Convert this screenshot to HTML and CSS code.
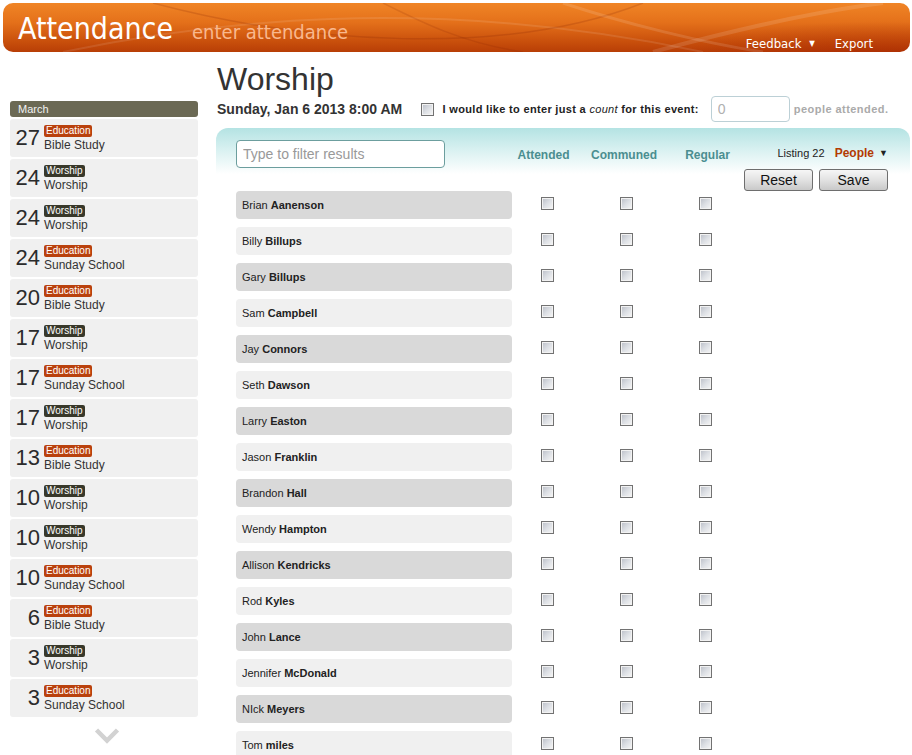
FILE: index.html
```html
<!DOCTYPE html>
<html lang="en">
<head>
<meta charset="utf-8">
<title>Attendance</title>
<link rel="stylesheet" href="styles.css">
</head>
<body>
<header class="topbar">
  <svg class="swoosh" viewBox="0 0 907 49" preserveAspectRatio="none" aria-hidden="true">
    <path d="M60 49 C 200 20, 420 -10, 700 49" fill="none" stroke="rgba(255,255,255,0.10)" stroke-width="2"/>
    <path d="M150 0 C 300 40, 500 55, 640 0" fill="none" stroke="rgba(120,30,0,0.18)" stroke-width="1.5"/>
    <path d="M560 0 C 620 20, 700 40, 760 49" fill="none" stroke="rgba(255,255,255,0.12)" stroke-width="3"/>
    <path d="M650 49 C 720 30, 800 10, 880 0" fill="none" stroke="rgba(255,255,255,0.12)" stroke-width="4"/>
    <path d="M380 0 C 420 20, 460 40, 520 49" fill="none" stroke="rgba(120,30,0,0.15)" stroke-width="1.5"/>
  </svg>
  <h1 class="app-title">Attendance</h1>
  <span class="app-sub">enter attendance</span>
  <nav class="topnav">
    <a class="nav-link">Feedback <span class="caret">&#9660;</span></a>
    <a class="nav-link">Export</a>
  </nav>
</header>

<div class="page">
  <aside class="sidebar">
    <div class="month">March</div>
    <ul class="events">
      <li class="event"><span class="day">27</span><span class="info"><span class="tag edu">Education</span><span class="ename">Bible Study</span></span></li>
      <li class="event"><span class="day">24</span><span class="info"><span class="tag wor">Worship</span><span class="ename">Worship</span></span></li>
      <li class="event"><span class="day">24</span><span class="info"><span class="tag wor">Worship</span><span class="ename">Worship</span></span></li>
      <li class="event"><span class="day">24</span><span class="info"><span class="tag edu">Education</span><span class="ename">Sunday School</span></span></li>
      <li class="event"><span class="day">20</span><span class="info"><span class="tag edu">Education</span><span class="ename">Bible Study</span></span></li>
      <li class="event"><span class="day">17</span><span class="info"><span class="tag wor">Worship</span><span class="ename">Worship</span></span></li>
      <li class="event"><span class="day">17</span><span class="info"><span class="tag edu">Education</span><span class="ename">Sunday School</span></span></li>
      <li class="event"><span class="day">17</span><span class="info"><span class="tag wor">Worship</span><span class="ename">Worship</span></span></li>
      <li class="event"><span class="day">13</span><span class="info"><span class="tag edu">Education</span><span class="ename">Bible Study</span></span></li>
      <li class="event"><span class="day">10</span><span class="info"><span class="tag wor">Worship</span><span class="ename">Worship</span></span></li>
      <li class="event"><span class="day">10</span><span class="info"><span class="tag wor">Worship</span><span class="ename">Worship</span></span></li>
      <li class="event"><span class="day">10</span><span class="info"><span class="tag edu">Education</span><span class="ename">Sunday School</span></span></li>
      <li class="event"><span class="day">6</span><span class="info"><span class="tag edu">Education</span><span class="ename">Bible Study</span></span></li>
      <li class="event"><span class="day">3</span><span class="info"><span class="tag wor">Worship</span><span class="ename">Worship</span></span></li>
      <li class="event"><span class="day">3</span><span class="info"><span class="tag edu">Education</span><span class="ename">Sunday School</span></span></li>
    </ul>
    <div class="more">
      <svg width="26" height="17" viewBox="0 0 26 17" aria-hidden="true"><polyline points="2.5,3 13,13.5 23.5,3" fill="none" stroke="#d2d2d2" stroke-width="4.5"/></svg>
    </div>
  </aside>

  <main class="main">
    <h2 class="event-title">Worship</h2>
    <div class="event-meta">
      <span class="event-date">Sunday, Jan 6 2013 8:00 AM</span>
      <label class="count-opt"><input type="checkbox" class="cb"> I would like to enter just a <em>count</em> for this event:</label>
      <input class="count-input" type="text" placeholder="0">
      <span class="count-note">people attended.</span>
    </div>

    <section class="panel">
      <div class="panel-head">
        <input class="filter" type="text" placeholder="Type to filter results">
        <span class="col-label">Attended</span>
        <span class="col-label">Communed</span>
        <span class="col-label last">Regular</span>
        <div class="tools">
          <div class="listing">Listing 22 <span class="people">People</span> <span class="caret dark">&#9660;</span></div>
          <div class="btns"><button class="btn">Reset</button><button class="btn">Save</button></div>
        </div>
      </div>

      <div class="rows">
        <div class="name dark">Brian <b>Aanenson</b></div><span class="c"><input type="checkbox" class="cb"></span><span class="c"><input type="checkbox" class="cb"></span><span class="c last"><input type="checkbox" class="cb"></span>
        <div class="name">Billy <b>Billups</b></div><span class="c"><input type="checkbox" class="cb"></span><span class="c"><input type="checkbox" class="cb"></span><span class="c last"><input type="checkbox" class="cb"></span>
        <div class="name dark">Gary <b>Billups</b></div><span class="c"><input type="checkbox" class="cb"></span><span class="c"><input type="checkbox" class="cb"></span><span class="c last"><input type="checkbox" class="cb"></span>
        <div class="name">Sam <b>Campbell</b></div><span class="c"><input type="checkbox" class="cb"></span><span class="c"><input type="checkbox" class="cb"></span><span class="c last"><input type="checkbox" class="cb"></span>
        <div class="name dark">Jay <b>Connors</b></div><span class="c"><input type="checkbox" class="cb"></span><span class="c"><input type="checkbox" class="cb"></span><span class="c last"><input type="checkbox" class="cb"></span>
        <div class="name">Seth <b>Dawson</b></div><span class="c"><input type="checkbox" class="cb"></span><span class="c"><input type="checkbox" class="cb"></span><span class="c last"><input type="checkbox" class="cb"></span>
        <div class="name dark">Larry <b>Easton</b></div><span class="c"><input type="checkbox" class="cb"></span><span class="c"><input type="checkbox" class="cb"></span><span class="c last"><input type="checkbox" class="cb"></span>
        <div class="name">Jason <b>Franklin</b></div><span class="c"><input type="checkbox" class="cb"></span><span class="c"><input type="checkbox" class="cb"></span><span class="c last"><input type="checkbox" class="cb"></span>
        <div class="name dark">Brandon <b>Hall</b></div><span class="c"><input type="checkbox" class="cb"></span><span class="c"><input type="checkbox" class="cb"></span><span class="c last"><input type="checkbox" class="cb"></span>
        <div class="name">Wendy <b>Hampton</b></div><span class="c"><input type="checkbox" class="cb"></span><span class="c"><input type="checkbox" class="cb"></span><span class="c last"><input type="checkbox" class="cb"></span>
        <div class="name dark">Allison <b>Kendricks</b></div><span class="c"><input type="checkbox" class="cb"></span><span class="c"><input type="checkbox" class="cb"></span><span class="c last"><input type="checkbox" class="cb"></span>
        <div class="name">Rod <b>Kyles</b></div><span class="c"><input type="checkbox" class="cb"></span><span class="c"><input type="checkbox" class="cb"></span><span class="c last"><input type="checkbox" class="cb"></span>
        <div class="name dark">John <b>Lance</b></div><span class="c"><input type="checkbox" class="cb"></span><span class="c"><input type="checkbox" class="cb"></span><span class="c last"><input type="checkbox" class="cb"></span>
        <div class="name">Jennifer <b>McDonald</b></div><span class="c"><input type="checkbox" class="cb"></span><span class="c"><input type="checkbox" class="cb"></span><span class="c last"><input type="checkbox" class="cb"></span>
        <div class="name dark">NIck <b>Meyers</b></div><span class="c"><input type="checkbox" class="cb"></span><span class="c"><input type="checkbox" class="cb"></span><span class="c last"><input type="checkbox" class="cb"></span>
        <div class="name">Tom <b>miles</b></div><span class="c"><input type="checkbox" class="cb"></span><span class="c"><input type="checkbox" class="cb"></span><span class="c last"><input type="checkbox" class="cb"></span>
      </div>
    </section>
  </main>
</div>
</body>
</html>
```

FILE: styles.css
```css
html { overflow: hidden; }
body {
  margin: 0;
  font-family: "Liberation Sans", Arial, sans-serif;
  color: #222;
  background: #fff;
}

/* ---------- top bar ---------- */
.topbar {
  position: relative;
  display: flex;
  align-items: baseline;
  height: 49px;
  margin: 3px 2px 0 3px;
  padding: 9px 37px 0 15px;
  box-sizing: border-box;
  border-radius: 10px;
  overflow: hidden;
  background:
    radial-gradient(ellipse 300px 60px at 880px 60px, rgba(160,30,0,0.55), rgba(160,30,0,0) 70%),
    linear-gradient(to bottom, #f08526 0%, #e4701a 40%, #c9500c 78%, #b83e06 100%);
  font-family: "DejaVu Sans Condensed", "DejaVu Sans", sans-serif;
}
.swoosh {
  position: absolute;
  left: 0; top: 0;
  width: 100%; height: 100%;
}
.app-title {
  position: relative;
  margin: 0;
  font-size: 30px;
  line-height: 34px;
  font-weight: normal;
  color: #fff;
}
.app-sub {
  position: relative;
  margin-left: 19px;
  font-size: 20px;
  color: #f9b88e;
}
.topnav {
  position: relative;
  display: flex;
  gap: 20px;
  margin-left: auto;
  align-self: flex-end;
  margin-bottom: 0;
  font-size: 13px;
  line-height: 16px;
}
.nav-link { color: #fff; }
.caret { font-size: 8px; vertical-align: 2px; margin-left: 4px; }

/* ---------- page ---------- */
.page {
  display: flex;
  align-items: flex-start;
  padding-left: 10px;
}

/* ---------- sidebar ---------- */
.sidebar {
  width: 188px;
  margin-top: 49px;
  flex: none;
}
.month {
  height: 16px;
  line-height: 16px;
  padding-left: 8px;
  border-radius: 3px;
  background: #6b6954;
  color: #f2f2f2;
  font-size: 11px;
}
.events {
  list-style: none;
  margin: 0;
  padding: 0;
}
.event {
  display: flex;
  align-items: center;
  height: 38px;
  margin-top: 2px;
  border-radius: 3px;
  background: #f0f0f0;
}
.day {
  width: 30px;
  text-align: right;
  font-size: 22px;
  color: #2b2b2b;
  flex: none;
}
.info {
  display: flex;
  flex-direction: column;
  align-items: flex-start;
  margin-left: 4px;
  padding-top: 1px;
}
.tag {
  height: 12px;
  line-height: 12px;
  padding: 0 2px;
  border-radius: 2px;
  color: #fff;
  font-size: 10px;
}
.tag.edu { background: #b9410d; }
.tag.wor { background: #38382a; }
.ename {
  font-size: 12px;
  line-height: 16px;
  color: #333;
}
.more {
  display: flex;
  justify-content: center;
  padding: 10px 0 0 6px;
}

/* ---------- main ---------- */
.main {
  flex: 1;
  margin-left: 18px;
  margin-right: 2px;
}
.event-title {
  margin: 10px 0 0 1px;
  font-size: 32px;
  line-height: 34px;
  font-weight: normal;
  color: #333;
}
.event-meta {
  display: flex;
  align-items: center;
  height: 26px;
  padding-left: 1px;
}
.event-date {
  font-size: 14px;
  font-weight: bold;
  color: #333;
}
.count-opt {
  display: flex;
  align-items: center;
  margin-left: 19px;
  font-size: 11px;
  font-weight: bold;
  letter-spacing: 0.32px;
  color: #222;
  white-space: pre;
}
.count-opt em { font-weight: normal; }
.count-opt .cb { margin: 0 5px 0 0; }
.count-input {
  width: 79px;
  height: 26px;
  box-sizing: border-box;
  margin-left: 12px;
  padding: 0 6px;
  border: 1px solid #bcd0d6;
  border-radius: 4px;
  font: 14px "Liberation Sans", Arial, sans-serif;
}
.count-input::placeholder { color: #b0b0b0; }
.count-note {
  margin-left: 4px;
  font-size: 11px;
  font-weight: bold;
  letter-spacing: 0.45px;
  color: #aaa;
}

/* checkbox */
.cb {
  appearance: none;
  -webkit-appearance: none;
  width: 13px;
  height: 13px;
  margin: 0;
  box-sizing: border-box;
  border: 1px solid #727272;
  box-shadow: inset 0 0 0 1px #f2f2f2;
  background: linear-gradient(135deg, #b9bdc6 0%, #dcdfe4 50%, #f7f7f7 100%);
  display: block;
}

/* ---------- panel ---------- */
.panel {
  margin-top: 6px;
  padding: 12px 22px 0 20px;
  border-radius: 12px 12px 0 0;
  background: linear-gradient(to bottom, #b4e3e3 0px, #d9f1f1 22px, #ffffff 46px);
}
.panel-head {
  display: grid;
  grid-template-columns: 276px 79px 79px 71px 1fr;
}
.rows {
  display: grid;
  grid-template-columns: 276px 79px 79px 71px;
  row-gap: 8px;
}
.filter {
  width: 209px;
  height: 28px;
  box-sizing: border-box;
  padding: 0 6px;
  border: 1px solid #6c9e9e;
  border-radius: 4px;
  font: 14px "Liberation Sans", Arial, sans-serif;
  align-self: start;
}
.filter::placeholder { color: #999; }
.col-label {
  align-self: start;
  margin-top: 8px;
  padding-right: 16px;
  text-align: center;
  font-size: 12px;
  line-height: 14px;
  font-weight: bold;
  color: #4b8e90;
}
.col-label.last { padding-right: 0; padding-left: 4px; }
.tools {
  display: flex;
  flex-direction: column;
  align-items: flex-end;
}
.listing {
  margin-top: 5px;
  font-size: 11px;
  line-height: 16px;
  color: #222;
}
.people {
  margin-left: 7px;
  font-size: 12px;
  font-weight: bold;
  color: #b33a02;
}
.caret.dark { color: #222; margin-left: 2px; font-size: 9px; vertical-align: 1px; }
.btns {
  display: flex;
  gap: 6px;
  margin-top: 8px;
}
.btn {
  width: 69px;
  height: 22px;
  padding: 0;
  border: 1px solid #6e6e6e;
  border-radius: 3px;
  background: linear-gradient(to bottom, #f6f6f6 0%, #e2e2e2 50%, #c9c9c9 100%);
  font: 14px "Liberation Sans", Arial, sans-serif;
  color: #111;
}

.name {
  height: 28px;
  line-height: 28px;
  padding-left: 6px;
  border-radius: 4px;
  background: #f0f0f0;
  font-size: 11px;
  color: #222;
}
.name.dark { background: #d9d9d9; }
.c {
  display: flex;
  justify-content: center;
  padding: 6px 8px 0 0;
}
.c.last { padding-right: 0; }
```
